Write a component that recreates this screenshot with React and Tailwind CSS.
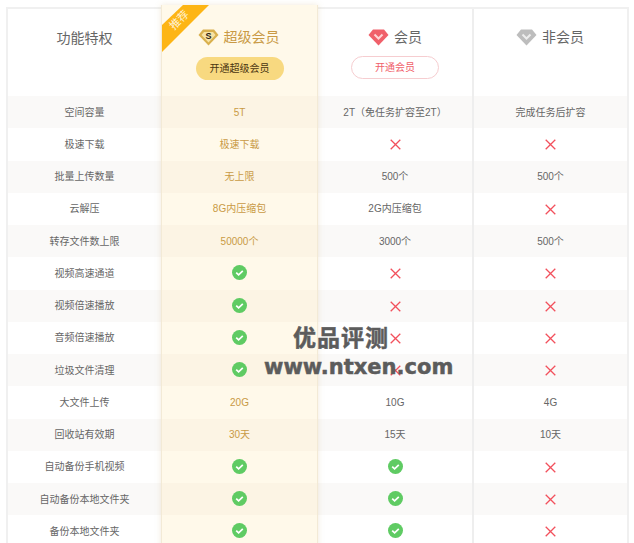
import React from "react";

const features = [
  ["空间容量", "5T", "2T（免任务扩容至2T）", "完成任务后扩容"],
  ["极速下载", "极速下载", "no", "no"],
  ["批量上传数量", "无上限", "500个", "500个"],
  ["云解压", "8G内压缩包", "2G内压缩包", "no"],
  ["转存文件数上限", "50000个", "3000个", "500个"],
  ["视频高速通道", "yes", "no", "no"],
  ["视频倍速播放", "yes", "no", "no"],
  ["音频倍速播放", "yes", "no", "no"],
  ["垃圾文件清理", "yes", "no", "no"],
  ["大文件上传", "20G", "10G", "4G"],
  ["回收站有效期", "30天", "15天", "10天"],
  ["自动备份手机视频", "yes", "yes", "no"],
  ["自动备份本地文件夹", "yes", "yes", "no"],
  ["备份本地文件夹", "yes", "yes", "no"],
];

const YesIcon = () => (
  <svg className="-mt-[1px]" width="15" height="15" viewBox="0 0 15 15">
    <circle cx="7.5" cy="7.5" r="7.5" fill="#5fcb63" />
    <path d="M4.2 7.6l2.4 2.3 4.2-4.1" fill="none" stroke="#fff" strokeWidth="1.7" />
  </svg>
);

const NoIcon = () => (
  <svg className="mt-[1px]" width="11" height="11" viewBox="0 0 11 11">
    <path d="M0.7 0.7l9.6 9.6M10.3 0.7l-9.6 9.6" fill="none" stroke="#f2505c" strokeWidth="1.3" />
  </svg>
);

const SuperIcon = () => (
  <svg width="21" height="17" viewBox="0 0 21 17">
    <path d="M5 0.5h11l4.5 5.500-10 10.500L0.5 6z" fill="#d9b04e" />
    <path d="M6 3h9l2.500 3-7 7.500-7-7.500z" fill="#f7e3a6" />
    <text x="10.500" y="10" textAnchor="middle" fontSize="9" fontWeight="700" fill="#2d2416" fontFamily="Liberation Sans">S</text>
  </svg>
);

const GemIcon = ({ dark, light }) => (
  <svg width="21" height="17" viewBox="0 0 21 17">
    <path d="M5 0.500h11l4.500 5.500-10 10.500L0.500 6z" fill={dark} />
    <path d="M6.500 5.500l4 4 4-4" fill="none" stroke={light} strokeWidth="2" />
  </svg>
);

const Cell = ({ value, index, accent }) => {
  const striped = index % 2 === 0;
  const bg = accent
    ? striped ? "bg-[#fcf4e4]" : "bg-[#fff9ea]"
    : striped ? "bg-[#faf9f8]" : "bg-white";
  const color = accent ? "text-[#c99a45]" : "text-[#666666]";

  return (
    <div className={`h-[32.25px] flex items-center justify-center text-[10px] ${bg} ${color}`}>
      {value === "yes" ? <YesIcon /> : value === "no" ? <NoIcon /> : value}
    </div>
  );
};

const App = () => {
  return (
    <div
      className="relative h-[543px] w-[634px] overflow-hidden bg-white"
      style={{ fontFamily: '"Liberation Sans", "Noto Sans CJK SC", sans-serif' }}
    >
      <div className="ml-[6px] mt-[7px] flex w-[623px] border-x-2 border-t-2 border-[#f0f0f0]">
        {/* feature names */}
        <div className="w-[153px] shrink-0">
          <div className="h-[87px] pt-[18px] text-center text-[14px] leading-[22px] text-[#666666]">功能特权</div>
          {features.map((row, i) => (
            <Cell key={i} value={row[0]} index={i} />
          ))}
        </div>

        {/* super member */}
        <div className="relative z-10 -mt-[4px] w-[157px] shrink-0 border-x border-[#f3ead6] shadow-[0_0_6px_rgba(200,170,110,0.25)]">
          <div className="flex h-[91px] flex-col items-center bg-[#fff9ea] pt-[21px]">
            <div className="flex items-center gap-[5px] pr-[2px] text-[14px] leading-[22px] text-[#c99a45]">
              <SuperIcon />
              超级会员
            </div>
            <div className="mt-[9px] flex h-[23px] w-[88px] items-center justify-center rounded-full bg-[#f8d980] text-[10px] text-[#4a3510]">
              开通超级会员
            </div>
          </div>
          {features.map((row, i) => (
            <Cell key={i} value={row[1]} index={i} accent />
          ))}
          <svg className="absolute left-0 top-0" width="48" height="48" viewBox="0 0 48 48">
            <path d="M21 0h26L0 47V20z" fill="#fdb515" />
          </svg>
          <span className="absolute left-[6px] top-[8px] rotate-[-45deg] text-[11px] leading-[14px] text-[#fff3d6]">推荐</span>
        </div>

        {/* member */}
        <div className="w-[154px] shrink-0">
          <div className="flex h-[87px] flex-col items-center pt-[17px]">
            <div className="flex items-center gap-[5px] text-[14px] leading-[22px] text-[#666666]">
              <GemIcon dark="#f0606a" light="#ffd5d5" />
              会员
            </div>
            <div className="mt-[8px] flex h-[23px] w-[88px] items-center justify-center rounded-full border border-[#f6cdd0] text-[10px] text-[#f0606a]">
              开通会员
            </div>
          </div>
          {features.map((row, i) => (
            <Cell key={i} value={row[2]} index={i} />
          ))}
        </div>

        {/* non member */}
        <div className="flex-1 border-l-2 border-[#eeeeee]">
          <div className="h-[87px] pt-[17px] pr-[1px]">
            <div className="flex items-center justify-center gap-[5px] text-[14px] leading-[22px] text-[#666666]">
              <GemIcon dark="#bdbdbd" light="#ededed" />
              非会员
            </div>
          </div>
          {features.map((row, i) => (
            <Cell key={i} value={row[3]} index={i} />
          ))}
        </div>
      </div>

      {/* watermark */}
      <div className="absolute left-[264px] top-[324px] z-20 text-[#5c5c5c] [-webkit-text-stroke:0.5px_#5c5c5c]">
        <div className="ml-[29px] text-[23px] font-bold leading-[28px] tracking-[1px]">优品评测</div>
        <div className="text-[21px] font-bold leading-[30px]" style={{ fontFamily: '"DejaVu Sans", sans-serif' }}>www.ntxen.com</div>
      </div>
    </div>
  );
};

export default App;
